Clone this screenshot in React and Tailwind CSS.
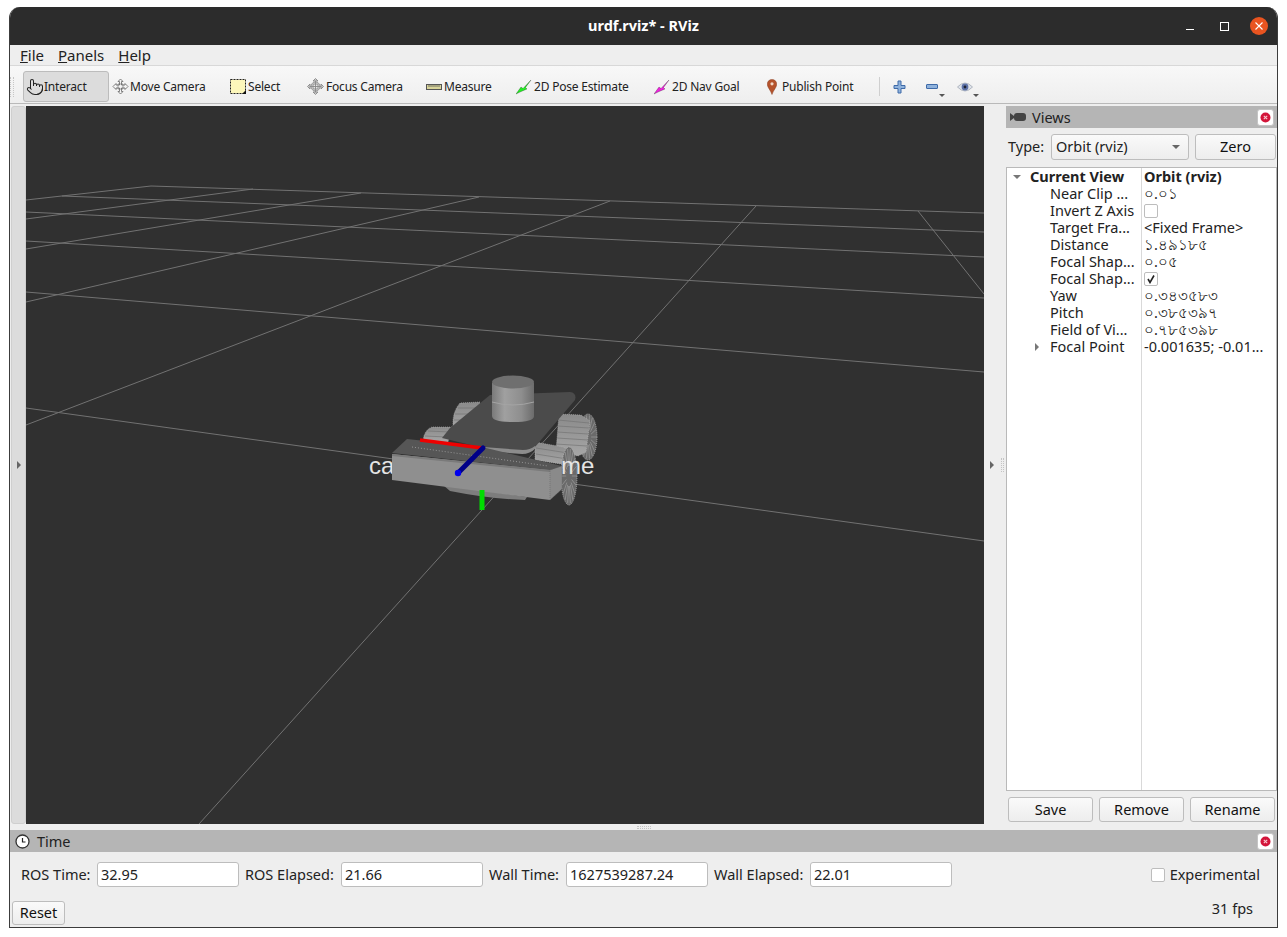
import { Pointer } from 'lucide-react';

const FONT = "font-['Noto_Sans','DejaVu_Sans',sans-serif]";

// grid lines of the 3d view, in page coordinates (the svg viewBox starts at the view origin)
const GRID = [
  [151, 186, 984, 213], [62, 196, 984, 232], [26, 212, 984, 257], [26, 241, 984, 298],
  [26, 292, 984, 372], [26, 408, 984, 541], [151, 186, 26, 200], [253, 189, 26, 219],
  [361, 193, 26, 249], [479, 197, 26, 302], [610, 201, 26, 425], [756, 206, 199, 824],
  [918, 211, 984, 294],
];

const TOOLS = [
  { label: 'Interact', w: 'w-[86px]', gap: 'gap-0', pl: 'pl-[2px]', active: true, icon: <Pointer size={18} strokeWidth={1.4} color="#222" /> },
  { label: 'Move Camera', w: 'w-[118px]', gap: 'gap-[1px]', pl: 'pl-[3px]', icon: <MoveIcon /> },
  { label: 'Select', w: 'w-[77px]', gap: 'gap-[2px]', pl: 'pl-[3px]', icon: <SelectIcon /> },
  { label: 'Focus Camera', w: 'w-[119px]', gap: 'gap-[2px]', pl: 'pl-[3px]', icon: <FocusIcon /> },
  { label: 'Measure', w: 'w-[90px]', gap: 'gap-[2px]', pl: 'pl-[3px]', icon: <MeasureIcon /> },
  { label: '2D Pose Estimate', w: 'w-[138px]', gap: 'gap-[2px]', pl: 'pl-[3px]', icon: <ArrowIcon color="#22ee22" /> },
  { label: '2D Nav Goal', w: 'w-[113px]', gap: 'gap-[2px]', pl: 'pl-[3px]', icon: <ArrowIcon color="#ee22dd" /> },
  { label: 'Publish Point', w: 'w-[115px]', gap: 'gap-[1px]', pl: 'pl-[3px]', icon: <PinIcon /> },
];

const ROWS = [
  { name: 'Near Clip ...', value: '০.০১' },
  { name: 'Invert Z Axis', check: false },
  { name: 'Target Fra...', value: '<Fixed Frame>' },
  { name: 'Distance', value: '১.৪৯১৮৫' },
  { name: 'Focal Shap...', value: '০.০৫' },
  { name: 'Focal Shap...', check: true },
  { name: 'Yaw', value: '০.৩৪৩৫৮৩' },
  { name: 'Pitch', value: '০.৩৮৫৩৯৭' },
  { name: 'Field of Vi...', value: '০.৭৮৫৩৯৮' },
  { name: 'Focal Point', value: '-0.001635; -0.01...', arrow: true },
];

const TIME_FIELDS = [
  { label: 'ROS Time:', value: '32.95', w: 'w-[76px]' },
  { label: 'ROS Elapsed:', value: '21.66', w: 'w-[96px]' },
  { label: 'Wall Time:', value: '1627539287.24', w: 'w-[77px]' },
  { label: 'Wall Elapsed:', value: '22.01', w: 'w-[96px]' },
];

function MoveIcon() {
  return (
    <svg width="17" height="17" viewBox="0 0 17 17" fill="#f4f4f4" stroke="#666" strokeWidth="0.8">
      <path d="M8.5 1 11 3.5H9.5V7H13V5.5L16 8.5 13 11.5V10H9.5V13.5H11L8.5 16 6 13.5H7.5V10H4V11.5L1 8.5 4 5.5V7H7.5V3.5H6Z" />
      <path d="M6 6H11V11H6Z" fill="none" strokeWidth="0.6" />
    </svg>
  );
}

function SelectIcon() {
  return (
    <svg width="16" height="15" viewBox="0 0 16 15">
      <rect x="0.5" y="0.5" width="15" height="14" fill="#fdf7bb" stroke="#222" strokeDasharray="2 1" />
      <path d="M12 15 16 15 16 11Z" fill="#111" />
    </svg>
  );
}

function FocusIcon() {
  return (
    <svg width="17" height="17" viewBox="0 0 17 17" fill="none" stroke="#888" strokeWidth="0.9">
      <path d="M8.5 .5 11 3H6ZM8.5 16.5 11 14H6ZM.5 8.5 3 11V6ZM16.5 8.5 14 11V6Z" fill="#ccc" />
      <circle cx="8.5" cy="8.5" r="4.5" fill="#e6e6e6" />
      <path d="M8.5 3V14M3 8.5H14M6 6H11V11H6Z" />
    </svg>
  );
}

function MeasureIcon() {
  return (
    <svg width="16" height="16" viewBox="0 0 16 16">
      <rect x="0.5" y="5.5" width="15" height="5" fill="#d8d49a" stroke="#555" />
      <path d="M3 6V8M5 6V8M7 6V8M9 6V8M11 6V8M13 6V8" stroke="#555" strokeWidth="0.8" />
    </svg>
  );
}

function ArrowIcon({ color }) {
  return (
    <svg width="16" height="16" viewBox="0 0 16 16">
      <path d="M0 15 5 8 7 9.5 15 1 9.5 8.5 11 10 4 13Z" fill={color} stroke="#0a0a0a" strokeWidth="0.25" />
    </svg>
  );
}

function PinIcon() {
  return (
    <svg width="10" height="16" viewBox="0 0 10 16" className="mr-[4px]">
      <path d="M5 .5C2.2.5.3 2.5.3 5.2.3 8.5 3.6 11 5 15.5 6.4 11 9.7 8.5 9.7 5.2 9.7 2.5 7.8.5 5 .5Z" fill="#b5532c" stroke="#8a3f22" strokeWidth="0.5" />
      <circle cx="5" cy="4.8" r="1.6" fill="#f0d8c8" />
    </svg>
  );
}

function CloseBadge() {
  return (
    <div className="w-[17px] h-[17px] bg-white border border-[#c4c4c4] rounded-[3px] flex items-center justify-center">
      <svg width="11" height="11" viewBox="0 0 11 11">
        <circle cx="5.5" cy="5.5" r="5" fill="#d3153a" />
        <path d="M3.8 3.8 7.2 7.2M7.2 3.8 3.8 7.2" stroke="#f9c8d0" strokeWidth="1.1" />
      </svg>
    </div>
  );
}

function Btn({ children, className }) {
  return (
    <div className={`flex items-center justify-center border border-[#bdbdbd] rounded-[3px] bg-gradient-to-b from-[#fafafa] to-[#ededed] text-[14.5px] text-[#111] ${className}`}>
      {children}
    </div>
  );
}

// a tread seen from the side: filled outline plus cross lines
function Tread({ d, lines }) {
  return (
    <g>
      <path d={d} fill="url(#tread)" stroke="#b4b4b4" strokeWidth="0.6" strokeDasharray="1 1" />
      {lines.map(([x1, y1, x2, y2], i) => (
        <line key={i} x1={x1} y1={y1} x2={x2} y2={y2} stroke="#747474" strokeWidth="0.7" />
      ))}
    </g>
  );
}

function Disc({ cx, cy, rx, ry }) {
  const spokes = Array.from({ length: 18 }).map((_, i) => (i / 18) * Math.PI * 2);
  return (
    <g>
      <ellipse cx={cx} cy={cy} rx={rx} ry={ry} fill="#6a6a6a" stroke="#b8b8b8" strokeWidth="0.8" strokeDasharray="1 1" />
      {spokes.map((a, i) => (
        <line
          key={i}
          x1={cx + Math.cos(a) * rx * 0.35}
          y1={cy + Math.sin(a) * ry * 0.35}
          x2={cx + Math.cos(a) * rx * 0.95}
          y2={cy + Math.sin(a) * ry * 0.95}
          stroke="#a4a4a4"
          strokeWidth="0.6"
        />
      ))}
    </g>
  );
}

function Scene() {
  return (
    <svg className="block w-full h-full" viewBox="26 106 958 718">
      <defs>
        <linearGradient id="cyl" x1="0" y1="0" x2="1" y2="0">
          <stop offset="0" stopColor="#7a7a7a" />
          <stop offset="0.3" stopColor="#a0a0a0" />
          <stop offset="0.7" stopColor="#8e8e8e" />
          <stop offset="1" stopColor="#6c6c6c" />
        </linearGradient>
        <linearGradient id="tread" x1="0" y1="0" x2="0" y2="1">
          <stop offset="0" stopColor="#8a8a8a" />
          <stop offset="1" stopColor="#a6a6a6" />
        </linearGradient>
      </defs>
      {GRID.map(([x1, y1, x2, y2], i) => (
        <line key={i} x1={x1} y1={y1} x2={x2} y2={y2} stroke="#727272" strokeWidth="1" />
      ))}

      {/* tracks behind the plate */}
      <Tread
        d="M480 402 460 403Q452 412 453 427L472 430Z"
        lines={[[458, 408, 478, 408], [455, 414, 476, 414], [454, 420, 474, 420]]}
      />
      <Tread d="M452 427 432 427Q424 430 423 441L448 442Z" lines={[[428, 431, 450, 432], [425, 436, 447, 437]]} />
      <Disc cx={588} cy={437} rx={9} ry={23} />
      <Tread
        d="M559 414 581 415 590 421 586 452 578 456 556 451Z"
        lines={[[558, 420, 589, 423], [558, 426, 589, 428], [557, 432, 588, 434], [557, 438, 588, 440], [556, 444, 587, 446]]}
      />
      <Tread d="M535 442 563 447 570 451 567 465 535 460Z" lines={[[536, 448, 568, 453], [536, 454, 567, 459]]} />

      <text x="369" y="474" fontSize="24" fill="#e4e4e4" fontFamily="Liberation Sans, sans-serif">ca</text>

      {/* under body */}
      <path d="M443 485 527 497 525 500Q490 499 450 491Z" fill="#7d7d7d" />

      {/* plate */}
      <path d="M490 395 570 392Q577 393 575 400L535 447Q530 452 523 452L483 448 442 438 450 428Z" fill="#4b4b4b" />
      <path d="M483 447 523 450Q530 450 535 446L536 448Q530 454 522 454L483 451Z" fill="#8c8c8c" />

      {/* lidar */}
      <path d="M492 383V416Q492 422 513 422 534 422 534 416V383Z" fill="url(#cyl)" />
      <path d="M492 402Q513 408 534 402" fill="none" stroke="#a4a4a4" strokeWidth="1" />
      <ellipse cx="513" cy="382" rx="21" ry="6.5" fill="#6f6f6f" />

      {/* front right wheel, sticks out past the body */}
      <Disc cx={569} cy={476} rx={8} ry={29} />
      <text x="561" y="474" fontSize="24" fill="#e4e4e4" fontFamily="Liberation Sans, sans-serif">me</text>

      {/* front box */}
      <path d="M392 453 407 439 482 447 562 466 550 470Z" fill="#565656" />
      <path d="M412 447 548 466" stroke="#a5a5a5" strokeWidth="0.8" strokeDasharray="1 2" />
      <path d="M392 454 550 470V500L392 480Z" fill="#8f8f8f" />
      <path d="M392 454 550 470V472L392 456Z" fill="#7a7a7a" />
      <path d="M550 470 562 466V489L550 500Z" fill="#8a8a8a" stroke="#666" strokeDasharray="1 1" strokeWidth="0.6" />

      {/* axes */}
      <line x1="420" y1="440" x2="482" y2="448" stroke="#ee0000" strokeWidth="3.5" />
      <line x1="482" y1="490" x2="482" y2="510" stroke="#00dd00" strokeWidth="5" />
      <line x1="458" y1="473" x2="483" y2="448" stroke="#000088" strokeWidth="5" strokeLinecap="round" />
      <circle cx="458" cy="473" r="3.2" fill="#0000ee" />
    </svg>
  );
}

function App() {
  return (
    <div className={`w-[1287px] h-[937px] bg-white pt-[7px] pl-[9px] ${FONT}`}>
      <div className="w-[1269px] h-[921px] flex flex-col bg-[#eeeeee] rounded-t-[11px] overflow-hidden border-x border-b border-[#3c3c3c]">
        {/* title bar */}
        <div className="h-[38px] shrink-0 bg-[#2c2c2c] grid grid-cols-[1fr_auto_1fr] items-center">
          <div />
          <div className="text-white text-[14.5px] font-bold">urdf.rviz* - RViz</div>
          <div className="flex items-center justify-end gap-[26px] pr-[9px]">
            <div className="w-[8px] h-[1px] bg-white mt-[6px]" />
            <div className="w-[9px] h-[9px] border border-white" />
            <div className="w-[18px] h-[18px] rounded-full bg-[#e95420] flex items-center justify-center -ml-[5px]">
              <svg width="8" height="8" viewBox="0 0 8 8">
                <path d="M.5.5 7.5 7.5M7.5.5.5 7.5" stroke="#fff" strokeWidth="1.1" />
              </svg>
            </div>
          </div>
        </div>

        {/* menu bar */}
        <div className="h-[21px] shrink-0 flex items-center gap-[14px] pl-[10px] text-[15px] text-[#222] border-b border-[#d8d8d8]">
          <span><u>F</u>ile</span>
          <span><u>P</u>anels</span>
          <span><u>H</u>elp</span>
        </div>

        {/* tool bar */}
        <div className="h-[38px] shrink-0 flex items-center pt-[4px] bg-gradient-to-b from-[#f8f8f8] to-[#eeeeee] border-b border-[#b9b9b9]">
          <div className="w-[4px] h-[20px] mr-[9px] border-x border-dotted border-[#c6c6c6]" />
          {TOOLS.map(t => (
            <div
              key={t.label}
              className={`${t.w} ${t.pl} ${t.gap} h-[31px] shrink-0 flex items-center text-[12px] tracking-[-0.2px] text-[#222] rounded-[3px] ${t.active ? 'bg-[#dcdcdc] border border-[#bcbcbc]' : ''}`}
            >
              {t.icon}
              <span>{t.label}</span>
            </div>
          ))}
          <div className="w-px h-[19px] bg-[#cfcfcf] mr-[13px]" />
          <svg width="13" height="14" viewBox="0 0 13 14" className="mr-[20px]">
            <path d="M5 1H8V5.5H12V8.5H8V13H5V8.5H1V5.5H5Z" fill="#8fb2dc" stroke="#3e6aa8" />
          </svg>
          <div className="relative mr-[19px]">
            <div className="w-[12px] h-[5px] bg-[#8fb2dc] border border-[#3e6aa8] rounded-[1px]" />
            <div className="absolute left-[13px] top-[10px] border-x-[3px] border-t-[3px] border-x-transparent border-t-[#555]" />
          </div>
          <div className="relative">
            <svg width="16" height="12" viewBox="0 0 16 12" className="block">
              <path d="M.5 6Q8-2 15.5 6 8 14 .5 6Z" fill="#dfe3ea" stroke="#9aa2ae" strokeWidth="0.7" />
              <circle cx="8" cy="6" r="3.4" fill="#5d72a8" />
              <circle cx="8" cy="6" r="1.4" fill="#1c2233" />
            </svg>
            <div className="absolute left-[16px] top-[13px] border-x-[3px] border-t-[3px] border-x-transparent border-t-[#555]" />
          </div>
        </div>

        {/* main area */}
        <div className="h-[718px] mt-[2px] shrink-0 flex">
          <div className="w-[15px] ml-[1px] shrink-0 bg-[#dcdcdc] border border-[#cfcfcf] rounded-[3px] flex items-center justify-center">
            <div className="border-y-[4px] border-l-[4px] border-y-transparent border-l-[#666]" />
          </div>
          <div className="w-[958px] shrink-0 bg-[#303030]">
            <Scene />
          </div>
          <div className="w-[22px] shrink-0 flex items-center pl-[6px]">
            <div className="border-y-[4px] border-l-[4px] border-y-transparent border-l-[#666]" />
            <div className="ml-[7px] w-[3px] h-[14px] border-x border-dotted border-[#c4c4c4]" />
          </div>

          {/* views panel */}
          <div className="w-[271px] shrink-0 flex flex-col">
            <div className="h-[22px] shrink-0 bg-[#b5b5b5] flex items-center pl-[4px] pr-[3px] gap-[6px] text-[14.5px] text-[#222]">
              <svg width="16" height="10" viewBox="0 0 16 10">
                <path d="M0 1 4 4V6L0 9Z" fill="#444" />
                <rect x="4" y="1" width="12" height="8" rx="3" fill="#444" />
              </svg>
              <span className="flex-1 pt-[2px]">Views</span>
              <CloseBadge />
            </div>
            <div className="h-[26px] mt-[6px] shrink-0 flex items-center text-[14.5px] text-[#222] pl-[2px]">
              <span className="w-[43px]">Type:</span>
              <div className="w-[138px] h-full flex items-center justify-between pl-[4px] pr-[8px] bg-gradient-to-b from-[#fafafa] to-[#ededed] border border-[#bdbdbd] rounded-[3px]">
                <span>Orbit (rviz)</span>
                <div className="border-x-[4px] border-t-[4px] border-x-transparent border-t-[#666]" />
              </div>
              <Btn className="w-[81px] h-full ml-[6px]">Zero</Btn>
            </div>

            {/* property tree */}
            <div className="mt-[7px] h-[624px] shrink-0 w-[271px] bg-white border border-[#b9b9b9] flex text-[14.5px] text-[#222] leading-[17px]">
              <div className="w-[135px] shrink-0 border-r border-[#d9d9d9]">
                <div className="h-[17px] flex items-center font-bold">
                  <div className="ml-[6px] mr-[9px] border-x-[4px] border-t-[4px] border-x-transparent border-t-[#777]" />
                  <span>Current View</span>
                </div>
                {ROWS.map((r, i) => (
                  <div key={i} className="h-[17px] flex items-center pl-[43px] whitespace-nowrap relative">
                    {r.arrow && <div className="absolute left-[28px] top-[5px] border-y-[4px] border-l-[4px] border-y-transparent border-l-[#777]" />}
                    {r.name}
                  </div>
                ))}
              </div>
              <div className="flex-1 pl-[2px]">
                <div className="h-[17px] font-bold flex items-center">Orbit (rviz)</div>
                {ROWS.map((r, i) => (
                  <div key={i} className="h-[17px] flex items-center whitespace-nowrap">
                    {r.check !== undefined ? (
                      <div className="w-[14px] h-[14px] bg-white border border-[#bdbdbd] rounded-[2px] flex items-center justify-center">
                        {r.check && (
                          <svg width="10" height="10" viewBox="0 0 10 10">
                            <path d="M2 5 4 8.5 8 1.5" fill="none" stroke="#222" strokeWidth="1.6" />
                          </svg>
                        )}
                      </div>
                    ) : (
                      r.value
                    )}
                  </div>
                ))}
              </div>
            </div>

            <div className="mt-[6px] h-[25px] shrink-0 flex gap-[6px] pl-[2px]">
              <Btn className="w-[85px]">Save</Btn>
              <Btn className="w-[85px]">Remove</Btn>
              <Btn className="w-[85px]">Rename</Btn>
            </div>
          </div>
        </div>

        {/* splitter */}
        <div className="h-[6px] shrink-0 flex justify-center items-center">
          <div className="w-[14px] h-[3px] border-y border-dotted border-[#c4c4c4]" />
        </div>

        {/* time panel */}
        <div className="h-[22px] shrink-0 bg-[#b5b5b5] flex items-center pl-[5px] pr-[3px] gap-[7px] text-[14.5px] text-[#222]">
          <svg width="15" height="15" viewBox="0 0 15 15">
            <circle cx="7.5" cy="7.5" r="6.5" fill="#fff" stroke="#333" strokeWidth="1.3" />
            <path d="M7.5 4V8H10.5" fill="none" stroke="#222" strokeWidth="1.2" />
          </svg>
          <span className="flex-1 pt-[2px]">Time</span>
          <CloseBadge />
        </div>
        <div className="mt-[10px] h-[25px] shrink-0 flex items-center pl-[11px] text-[14.5px] text-[#222]">
          {TIME_FIELDS.map(f => (
            <div key={f.label} className="flex items-center">
              <span className={`${f.w} whitespace-nowrap`}>{f.label}</span>
              <div className="w-[142px] h-[25px] bg-white border border-[#bdbdbd] rounded-[3px] flex items-center pl-[3px] mr-[6px]">{f.value}</div>
            </div>
          ))}
          <div className="ml-auto flex items-center gap-[5px] pr-[17px]">
            <div className="w-[14px] h-[14px] bg-white border border-[#bdbdbd] rounded-[2px]" />
            <span>Experimental</span>
          </div>
        </div>
        <div className="flex-1 flex items-end justify-between pl-[2px] pb-[2px] text-[14.5px] text-[#222]">
          <Btn className="w-[53px] h-[24px]">Reset</Btn>
          <span className="pr-[24px] pb-[5px]">31 fps</span>
        </div>
      </div>
    </div>
  );
}

export default App;
